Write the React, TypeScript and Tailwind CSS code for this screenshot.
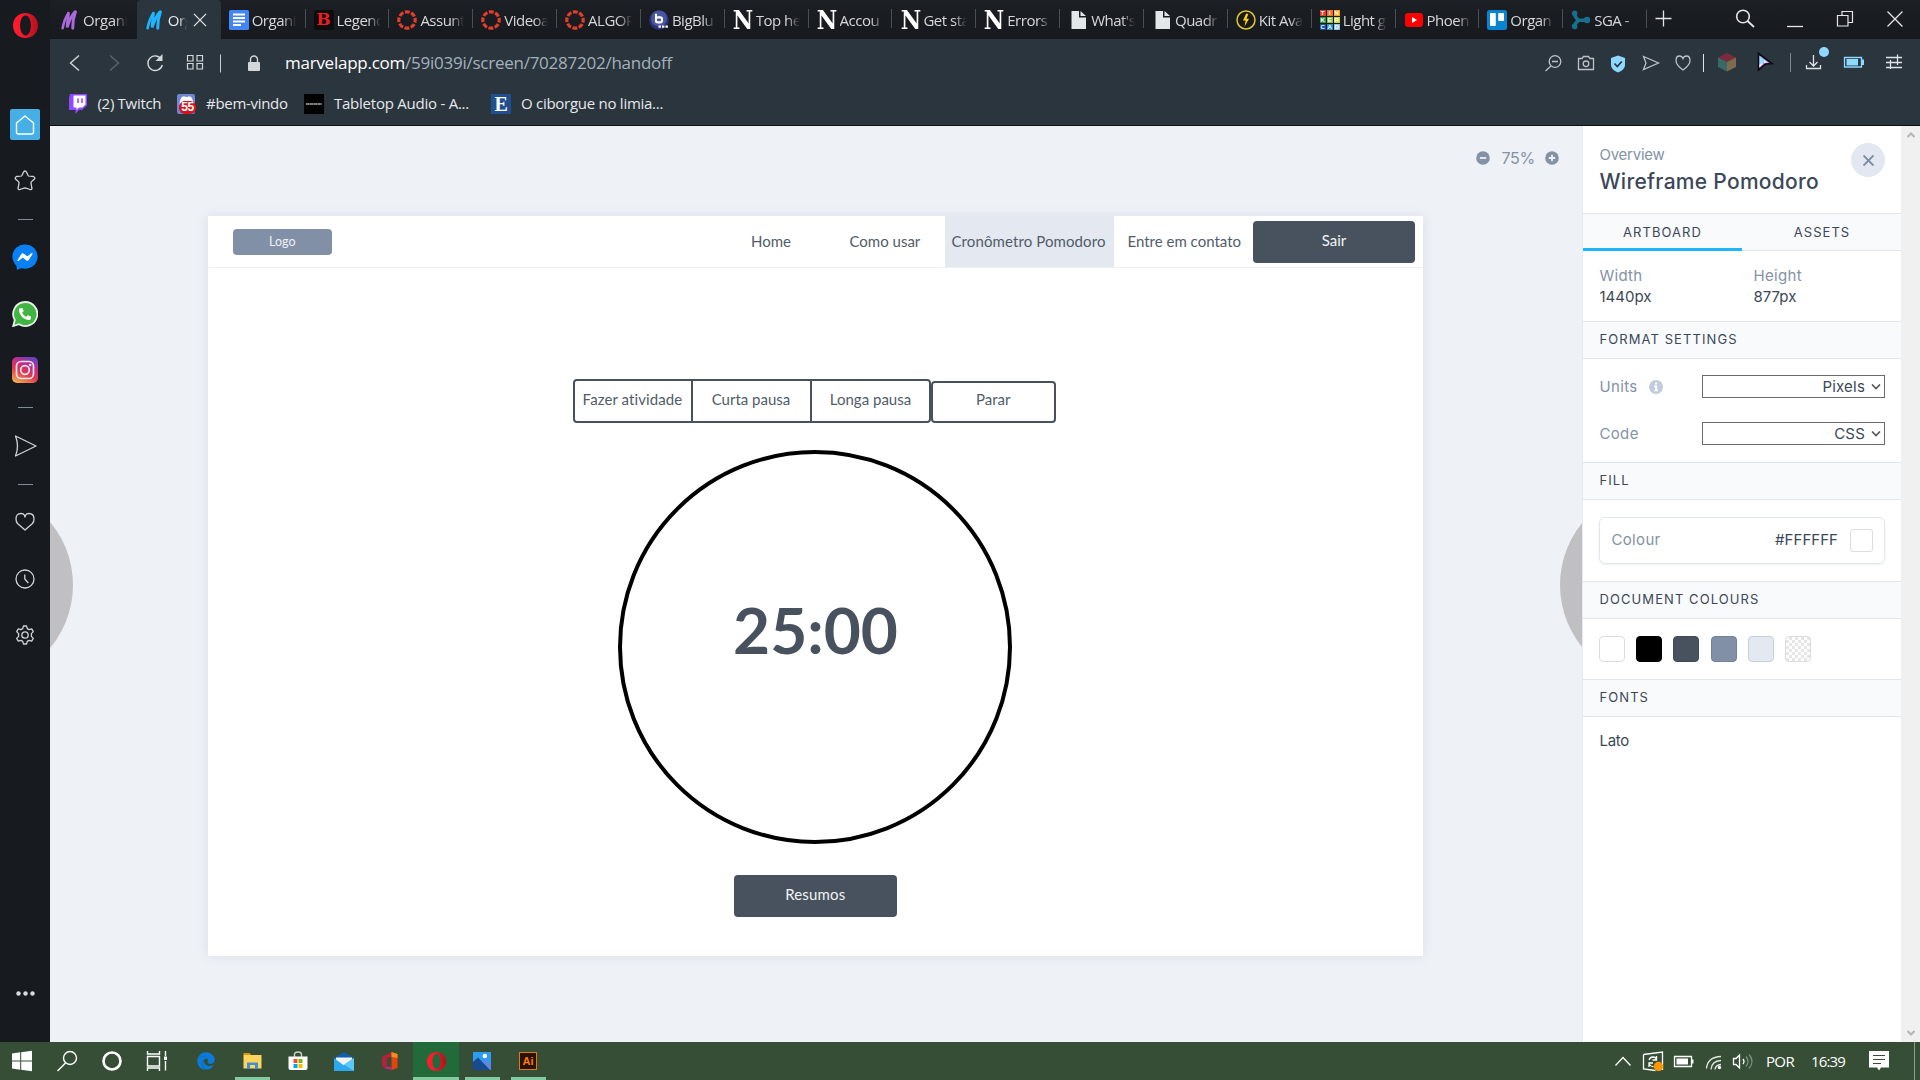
import React from 'react';
import { FaEdge, FaFacebookMessenger, FaPhoneAlt, FaDiscord } from 'react-icons/fa';

/* ---------- tab favicons ---------- */

const Marvel = ({ color }: { color: string }) => (
  <svg className="h-5 w-[17px] shrink-0" viewBox="0 0 17 20" fill="none" stroke={color} strokeLinecap="round">
    <path d="M1.600 18.200C2.600 13 4.200 8 7.200 3.400" strokeWidth="2.600" />
    <path d="M7.400 3.200C7.200 8 6 13 6.200 17.400C8 11.500 9.600 6.500 13.600 2.200" strokeWidth="2.800" />
    <path d="M14.400 1.800C12.600 7 11.600 12 11.800 18.200" strokeWidth="3" />
  </svg>
);
const Docs = () => (
  <svg className="size-5 shrink-0" viewBox="0 0 20 20">
    <rect width="20" height="20" rx="1.5" fill="#4285f4" />
    <path d="M4 4.500h12M4 8h12M4 11.500h12M4 15h8" stroke="#fff" strokeWidth="1.800" />
  </svg>
);
const LetterB = () => (
  <span className="flex size-5 shrink-0 items-center justify-center rounded-xs bg-[#0d0d0f] font-['DejaVu_Serif'] text-[17px] leading-none font-bold text-[#ec1c24]">B</span>
);
const Canvas = () => (
  <svg className="size-5 shrink-0" viewBox="0 0 20 20">
    <circle cx="10" cy="10" r="8.200" fill="none" stroke="#e13f2b" strokeWidth="3.200" strokeDasharray="4.900 1.540" strokeDashoffset="2.400" />
  </svg>
);
const BigBlue = () => (
  <svg className="size-5 shrink-0" viewBox="0 0 20 20">
    <circle cx="10" cy="10" r="9.800" fill="#283274" />
    <circle cx="10" cy="8.500" r="8" fill="#4a56a0" />
    <path d="M7 3.800v8.400M7 7.400h4.200q1.800 0 1.800 1.800v1.400q0 1.800-1.800 1.800H8.800q-1.800 0-1.800-1.800" stroke="#fff" strokeWidth="2.100" fill="none" />
    <path d="M9.500 16.600h2.400M13 16.600h2.400M16.500 16.600h2.400" stroke="#fff" strokeWidth="2.400" />
  </svg>
);
const LetterN = () => (
  <span className="flex h-5 w-5 shrink-0 items-center justify-center font-['DejaVu_Serif'] text-[26px] leading-none font-bold text-white">
    <span className="scale-x-[0.86]">N</span>
  </span>
);
const Page = () => (
  <svg className="h-5 w-5 shrink-0" viewBox="0 0 20 20" fill="#e4e7ea">
    <path d="M3.500 1h7.500v6.500H18V19H3.500zM12.500 1l5.500 5h-5.500z" />
  </svg>
);
const Bolt = () => (
  <svg className="size-5 shrink-0" viewBox="0 0 20 20">
    <circle cx="10" cy="10" r="9" fill="#191a12" stroke="#dfc63c" strokeWidth="1.500" />
    <path d="M10.200 3.500L7 10.600h2.600L8.600 16.600L13 8.800h-2.600L12.400 4z" fill="#ffd21a" />
  </svg>
);
const TINKER = [
  ['T', '#e33b2e'], ['I', '#f2702a'], ['N', '#f8a01c'],
  ['K', '#2a9d43'], ['E', '#8cc63f'], ['R', '#c9d62c'],
  ['C', '#1d4f9c'], ['A', '#2c8fd6'], ['D', '#8ac3e6'],
];
const Tinkercad = () => (
  <span className="grid size-5 shrink-0 grid-cols-3 gap-px">
    {TINKER.map(([l, c]) => (
      <span key={l} className="flex items-center justify-center overflow-hidden font-['Liberation_Sans'] text-[6px] leading-none font-bold text-white" style={{ background: c }}>{l}</span>
    ))}
  </span>
);
const YouTube = () => (
  <span className="flex size-5 shrink-0 items-center justify-center">
    <svg className="h-[14px] w-[18px]" viewBox="0 0 18 14"><rect width="18" height="14" rx="3" fill="#f00" /><path d="M7 4v6l5-3z" fill="#fff" /></svg>
  </span>
);
const Trello = () => (
  <svg className="size-5 shrink-0" viewBox="0 0 20 20">
    <rect width="20" height="20" rx="2.500" fill="#0a84d0" />
    <rect x="3" y="3" width="5.800" height="13" rx="1" fill="#fff" /><rect x="11.200" y="3" width="5.800" height="8" rx="1" fill="#fff" />
  </svg>
);
const Sga = () => (
  <svg className="size-5 shrink-0" viewBox="0 0 20 20">
    <g stroke="#17708f" strokeWidth="3.600" strokeLinecap="round" fill="#17708f">
      <path d="M3.400 3.200Q4 8 8 10.200Q4 12.600 3.400 16.600M8 10.200H16" fill="none" />
      <circle cx="3.600" cy="3.400" r="1" /><circle cx="3.600" cy="16.400" r="1" /><circle cx="16" cy="10" r="1.400" />
    </g>
  </svg>
);

const TABS: { t: string; icon: React.ReactNode }[] = [
  { t: 'Organi', icon: <Marvel color="#a86bd8" /> },
  { t: 'Org', icon: <Marvel color="#1fb6ff" /> },
  { t: 'Organi', icon: <Docs /> },
  { t: 'Legend', icon: <LetterB /> },
  { t: 'Assunt', icon: <Canvas /> },
  { t: 'Videoa', icon: <Canvas /> },
  { t: 'ALGOR', icon: <Canvas /> },
  { t: 'BigBlu', icon: <BigBlue /> },
  { t: 'Top he', icon: <LetterN /> },
  { t: 'Accou', icon: <LetterN /> },
  { t: 'Get sta', icon: <LetterN /> },
  { t: 'Errors', icon: <LetterN /> },
  { t: "What's", icon: <Page /> },
  { t: 'Quadr', icon: <Page /> },
  { t: 'Kit Ava', icon: <Bolt /> },
  { t: 'Light g', icon: <Tinkercad /> },
  { t: 'Phoen', icon: <YouTube /> },
  { t: 'Organ', icon: <Trello /> },
  { t: 'SGA -', icon: <Sga /> },
];

function TabStrip() {
  return (
    <div className="flex h-[39px] bg-linear-to-b from-[#1c1f24] to-[#16191d] pl-[3px]">
      {TABS.map((tab, i) => (
        <div
          key={i}
          className={
            i === 1
              ? 'flex w-[83.850px] shrink-0 items-center rounded-t bg-[#2b353e] pl-[9px]'
              : i < 3
                ? 'flex w-[83.850px] shrink-0 items-center pl-[8px]'
                : 'relative flex w-[83.850px] shrink-0 items-center pl-[9px]'
          }
        >
          {i > 2 && <span className="absolute top-[9px] left-0 h-[19px] w-px bg-[#4a4f55]" />}
          {tab.icon}
          <span
            className={
              i === 1
                ? 'ml-[5px] w-[19px] overflow-hidden text-[15px] leading-[38px] tracking-[-0.400px] whitespace-nowrap text-[#e8eaec] [mask-image:linear-gradient(to_right,black_60%,transparent)]'
                : i === 0
                  ? 'ml-[5px] w-[45px] overflow-hidden text-[15px] leading-[38px] tracking-[-0.400px] whitespace-nowrap text-[#d5d7d9] [mask-image:linear-gradient(to_right,black_70%,transparent_98%)]'
                  : 'ml-[3px] w-[44px] overflow-hidden text-[15px] leading-[38px] tracking-[-0.500px] whitespace-nowrap text-[#d5d7d9] [mask-image:linear-gradient(to_right,black_70%,transparent)]'
            }
          >
            {tab.t}
          </span>
          {i === 1 && (
            <svg className="ml-[6px] size-[14px] shrink-0" viewBox="0 0 15 15" stroke="#e8eaec" strokeWidth="1.300"><path d="M1 1l13 13M14 1L1 14" /></svg>
          )}
        </div>
      ))}
      <svg className="h-[39px] w-[220px] grow" viewBox="1646 0 274 39" preserveAspectRatio="none" fill="none" stroke="#e3e5e7" strokeWidth="1.300">
        <path d="M1646.500 9.500V28" stroke="#4a4f55" strokeWidth="1" />
        <path d="M1655.500 18.500h16M1663.500 10.500v16" />
        <circle cx="1743" cy="16.500" r="6.300" strokeWidth="1.600" />
        <path d="M1747.500 21L1754 27" strokeWidth="1.800" />
        <path d="M1787 26.500h16" />
        <path d="M1837.500 15.500h10.500v10.500h-10.500zM1842 15.500v-4h10.500v11h-4.500" strokeWidth="1.200" />
        <path d="M1887.500 11.500l15 15M1902.500 11.500l-15 15" />
      </svg>
    </div>
  );
}

function AddressBar() {
  return (
    <div className="flex h-[48px] items-center">
      <svg className="h-[48px] w-[224px] shrink-0" viewBox="50 39 224 48" fill="none" stroke="#d3d7da" strokeWidth="1.400">
        <path d="M79 55.500l-8.500 7.500l8.500 7.500" />
        <path d="M110 55.500l8.500 7.500l-8.500 7.500" stroke="#5d666e" />
        <path d="M161.500 59.500A7.300 7.300 0 1 0 162.300 65" />
        <path d="M162.500 54v7h-7z" fill="#d3d7da" stroke="none" />
        <path d="M187.500 55.500h5.500v5.500h-5.500zM197 55.500h5.500v5.500h-5.500zM187.500 63.500h5.500v5.500h-5.500zM197 63.500h5.500v5.500h-5.500z" strokeWidth="1.200" />
        <path d="M220.500 54.500v18" stroke="#c9cdd1" strokeWidth="1" />
        <path d="M250.500 63v-3.500a3.500 3.500 0 0 1 7 0v3.500" />
        <rect x="248" y="62" width="12" height="9" rx="1" fill="#d3d7da" stroke="none" />
      </svg>
      <span className="ml-[11px] text-[17px] leading-[48px] tracking-[-0.250px] whitespace-nowrap text-[#a4b1bb]">
        <span className="text-white">marvelapp.com</span>/59i039i/screen/70287202/handoff
      </span>
      <svg className="ml-auto h-[48px] w-[390px] shrink-0" viewBox="1530 39 390 48" fill="none" stroke="#bcc2c7" strokeWidth="1.300">
        <circle cx="1555" cy="61.500" r="5.800" /><path d="M1551 66l-5.500 5M1552 61.500h6" />
        <path d="M1578.500 58.500h3.500l1.500-2h5l1.500 2h3.500v11h-15z" /><circle cx="1586" cy="63.800" r="2.800" />
        <path d="M1618 55.500l7 2.500v7q0 4.500-7 7.500q-7-3-7-7.500v-7z" fill="#8fd8ff" stroke="none" />
        <path d="M1614.500 63.500l2.800 3l4.500-5" stroke="#24333d" strokeWidth="1.700" />
        <path d="M1643.500 56.500l15 6.500l-15 6.500l2.500-6.500z" />
        <path d="M1683 70q-7-5-7-9.500q0-4.500 3.500-4.500q2.500 0 3.500 2.500q1-2.500 3.500-2.500q3.500 0 3.500 4.500q0 4.500-7 9.500z" />
        <path d="M1703.500 54v18" strokeWidth="1" stroke="#e0e3e5" />
        <g stroke="none">
          <path d="M1727 53l9 4.500l-9 4.500l-9-4.500z" fill="#7b2c3c" />
          <path d="M1718 57.500l9 4.500v9.500l-9-4.500z" fill="#376a62" /><path d="M1736 57.500l-9 4.500v9.500l9-4.500z" fill="#7c6b4c" />
        </g>
        <path d="M1758.500 53.500l13.500 10l-6.500.5l-7 6z" fill="#b183e8" stroke="#0b0c0e" strokeWidth="1.700" />
        <path d="M1759.500 56l5.500 4.500l-5.500 7z" fill="#8fe0ff" stroke="none" /><path d="M1759.500 64.500l4-1.500l-4 4.500zM1764 60l4 2.500l-4 .5z" fill="#f3ecff" stroke="none" />
        <path d="M1790.500 53v19" strokeWidth="1" stroke="#7f878e" />
        <path d="M1813.500 55v11M1809.500 62l4 4l4-4M1806.500 65v3.500h14v-3.500" stroke="#e0e3e5" />
        <circle cx="1824" cy="52" r="5" fill="#8fd8ff" stroke="none" />
        <path d="M1844.500 57.500h17v9.500h-17z" stroke="#8fd8ff" /><path d="M1846.500 59h11.500v6.500h-11.500zM1862 59.500h2v5.500h-2z" fill="#8fd8ff" stroke="none" />
        <path d="M1886 57.500h16M1886 62.500h16M1886 67.500h16M1897.500 54.500v5.500M1890.500 60v5M1897.500 60v5M1890.500 65v4" stroke="#e0e3e5" />
      </svg>
    </div>
  );
}

function Bookmarks() {
  return (
    <div className="flex h-[33px] items-center text-[15px] leading-[33px] tracking-[-0.300px] whitespace-nowrap text-[#e6e8ea]">
      <svg className="ml-[19px] h-5 w-[18px]" viewBox="0 0 18 20"><path d="M1 0H18V11.500L13 16H10L6.500 20V16H0V4z" fill="#9146ff" /><path d="M4.500 1.500h12v9l-3 3h-3.500l-2.500 2.500v-2.500h-3z" fill="#fff" /><path d="M9 4.500v4.500M13 4.500v4.500" stroke="#9146ff" strokeWidth="1.600" /></svg>
      <span className="ml-[10.500px] w-[68.500px] tracking-[-0.300px]">(2) Twitch</span>
      <span className="relative ml-[11px] flex h-5 w-[18px] justify-center rounded-xs bg-[#6f86d4]">
        <FaDiscord className="size-[15px] text-white" />
        <span className="absolute -right-px bottom-0 flex h-[13px] w-[17px] items-center justify-center rounded-md bg-[#d8121a] font-['Liberation_Sans'] text-[12px] leading-none font-bold tracking-[-0.500px] text-white">55</span>
      </span>
      <span className="ml-[11px] w-[97px]">#bem-vindo</span>
      <span className="ml-px flex h-5 w-5 items-center justify-center bg-black">
        <svg className="h-1 w-4" viewBox="0 0 16 4"><path d="M0 2h16" stroke="#a9a9a9" strokeWidth="1.600" strokeDasharray="3.400 .4" /></svg>
      </span>
      <span className="ml-[10px] w-[157px] tracking-[-0.240px]">Tabletop Audio - A...</span>
      <span className="flex h-5 w-5 items-center justify-center bg-[#1f4f91] font-['Liberation_Serif'] text-[20px] leading-none font-bold text-white">E</span>
      <span className="ml-[10px] tracking-[-0.270px]">O ciborgue no limia...</span>
    </div>
  );
}

/* ---------- Opera sidebar ---------- */

const Dash = () => <span className="block h-px w-[15px] bg-[#7f8b95]" />;

const OperaLogo = ({ id, className }: { id: string; className: string }) => (
  <svg className={className} viewBox="0 0 24 24">
    <defs>
      <linearGradient id={id} x1="0" x2="1"><stop offset=".3" stopColor="#ff1b2d" /><stop offset="1" stopColor="#b20f1d" /></linearGradient>
    </defs>
    <path fillRule="evenodd" fill={`url(#${id})`} d="M12 0C18.600 0 24 5 24 12s-5.400 12-12 12S0 19 0 12S5.400 0 12 0zM12 2.500C8.800 2.500 6.800 7 6.800 12s2 9.500 5.200 9.500s5.200-4.500 5.200-9.500s-2-9.500-5.200-9.500z" />
  </svg>
);

function Sidebar() {
  return (
    <aside className="flex w-[50px] shrink-0 flex-col items-center bg-[#171b20]">
      <OperaLogo id="opera-side" className="mt-[13px] size-[25px]" />
      <span className="mt-[71px] flex h-[31px] w-[30px] items-center justify-center rounded-xs bg-[#46b0e6]">
        <svg className="size-[20px]" viewBox="0 0 20 20" fill="none" stroke="#fff" strokeWidth="1.400"><path d="M1.500 8L10 1l8.500 7v9q0 2-2 2h-13q-2 0-2-2z" strokeLinejoin="round" /></svg>
      </span>
      <svg className="mt-[30px] mr-px h-[21px] w-[22px]" viewBox="0 0 22 21" fill="none" stroke="#d0d4d8" strokeWidth="1.300" strokeLinejoin="round"><path d="M11 1q1 0 1.800 1.800Q13.900 5.600 14.500 6q1 .3 5 .5Q21.500 7.500 20.500 9q-3.300 2.700-3.500 3.500q0 1.500 1 6q-.5 1.500-2 1q-3.800-1.500-5-1.500t-5 1.500q-1.500.5-2-1q1-4.500 1-6Q4.800 11.700 1.500 9Q.5 7.500 2.500 6.500q4-.2 5-.5Q8.100 5.600 9.200 2.800Q10 1 11 1z" /></svg>
      <div className="mt-[28px]"><Dash /></div>
      <span className="relative mt-[24px] flex size-[26px] items-center justify-center">
        <span className="absolute inset-1 rounded-full bg-white" />
        <FaFacebookMessenger className="relative size-[26px] text-[#0a80f5]" />
      </span>
      <span className="relative mt-[31px] flex size-[26px] items-center justify-center">
        <svg className="absolute inset-0 size-[26px]" viewBox="0 0 26 26"><path d="M13 1a12 12 0 1 1-6 22.200L1.200 25l1.600-6A12 12 0 0 1 13 1z" fill="#41b543" stroke="#e9efe9" strokeWidth="1.800" /></svg>
        <FaPhoneAlt className="relative size-[12px] -scale-x-100 rotate-90 text-white" />
      </span>
      <svg className="mt-[30px] size-[26px]" viewBox="0 0 26 26" fill="none">
        <defs>
          <linearGradient id="insta" x1=".2" y1="1" x2=".7" y2="0"><stop stopColor="#f3b04b" /><stop offset=".4" stopColor="#e2384f" /><stop offset=".75" stopColor="#b82d91" /><stop offset="1" stopColor="#6743bd" /></linearGradient>
        </defs>
        <rect width="26" height="26" rx="5" fill="url(#insta)" />
        <rect x="4.500" y="4.500" width="17" height="17" rx="4.500" stroke="#f5e9ee" strokeWidth="1.700" /><circle cx="13" cy="13" r="4.300" stroke="#f5e9ee" strokeWidth="1.700" /><circle cx="18.200" cy="8" r="1.200" fill="#fff" />
      </svg>
      <div className="mt-[24px]"><Dash /></div>
      <svg className="mt-[27px] h-[22px] w-[23px]" viewBox="0 0 23 22" fill="none" stroke="#d0d4d8" strokeWidth="1.300" strokeLinejoin="round"><path d="M1.500 1L22 11L1.500 21Q5.500 11 1.500 1z" /></svg>
      <div className="mt-[27px]"><Dash /></div>
      <svg className="mt-[27px] mr-px h-[19px] w-[20px]" viewBox="0 0 20 19" fill="none" stroke="#d0d4d8" strokeWidth="1.300" strokeLinejoin="round"><path d="M10 18L2.500 11.500Q1 9.500 1 7Q1 1.500 6 1.500Q8.500 1.500 9.300 3L10 5L10.700 3Q11.500 1.500 14 1.500Q19 1.500 19 7Q19 9.500 17.500 11.500z" /></svg>
      <svg className="mt-[38px] mr-px size-[20px]" viewBox="0 0 20 20" fill="none" stroke="#d0d4d8" strokeWidth="1.300"><circle cx="10" cy="10" r="9" /><path d="M9.800 5.500v4.500l3.500 4" /></svg>
      <svg className="mt-[36px] mr-px size-[20px]" viewBox="0 0 20 20" fill="none" stroke="#d0d4d8" strokeWidth="1.300" strokeLinejoin="round"><circle cx="10" cy="10" r="3.200" /><path d="M8.500 1h3l.8 2.600l1.700 1l2.700-.7l1.600 2.700l-1.900 2v2.800l1.900 2l-1.600 2.700l-2.700-.7l-1.700 1l-.8 2.600h-3l-.8-2.600l-1.700-1l-2.700.7l-1.600-2.700l1.900-2V8.600l-1.900-2l1.600-2.700l2.700.7l1.700-1z" /></svg>
      <svg className="mt-[346px] h-[5px] w-[19px]" viewBox="0 0 19 5" fill="#d8dbde"><circle cx="2.500" cy="2.500" r="2.200" /><circle cx="9.500" cy="2.500" r="2.200" /><circle cx="16.500" cy="2.500" r="2.200" /></svg>
    </aside>
  );
}

/* ---------- artboard ---------- */

function Artboard() {
  return (
    <div className="flex h-[740px] w-[1215px] flex-col bg-white font-['Lato',sans-serif] text-[15px] text-[#525c68] shadow-[0_0_10px_rgba(132,146,166,0.180)]">
      <header className="flex h-[52px] shrink-0 items-start border-b border-[#edf1f7] leading-[50px] whitespace-nowrap">
        <div className="mt-[13px] ml-[24.500px] h-[26px] w-[99.500px] rounded bg-[#8190a7] text-center text-[12.500px] leading-[25px] text-[#eef1f5]">Logo</div>
        <span className="ml-[419px] w-[98.500px]">Home</span>
        <span className="w-[95px]">Como usar</span>
        <span className="h-[51px] w-[169px] bg-[#e4e8f1] pl-[7px] tracking-[0.100px]">Cronômetro Pomodoro</span>
        <span className="w-[139.500px] pl-[14px]">Entre em contato</span>
        <div className="mt-[5px] h-[42px] w-[162px] rounded bg-[#48525e] text-center leading-[39px] text-[#f1f3f5]">Sair</div>
      </header>
      <div className="mt-[111px] ml-[364.500px] flex items-end text-center leading-[37px] whitespace-nowrap">
        <div className="flex h-[43.500px] rounded border-2 border-[#48525e]">
          <span className="w-[118px] border-r-2 border-[#48525e] tracking-[0.100px]">Fazer atividade</span>
          <span className="w-[119px] border-r-2 border-[#48525e]">Curta pausa</span>
          <span className="w-[117px] pl-px">Longa pausa</span>
        </div>
        <div className="h-[42px] w-[125.500px] rounded border-2 border-[#48525e] leading-[32px]">Parar</div>
      </div>
      <div className="mt-[27px] flex justify-center">
        <div className="mr-px h-[394px] w-[394px] rounded-full border-4 border-black pt-[136px] pl-px text-center text-[64px] leading-[80px] font-bold text-[#48525e]">25:00</div>
      </div>
      <div className="mt-[31px] ml-[526px] h-[42px] w-[162.500px] rounded bg-[#48525e] text-center leading-[39px] tracking-[0.150px] text-[#f1f3f5]">Resumos</div>
    </div>
  );
}

function ArtboardArea() {
  return (
    <main className="relative flex-1 overflow-hidden bg-[#eef1f6]">
      <span className="absolute top-[361px] -left-[173px] size-[196px] rounded-full bg-[#c0c0c3]" />
      <span className="absolute top-[361px] left-[1510px] size-[196px] rounded-full bg-[#c0c0c3]" />
      <div className="flex h-[64px] items-center justify-end pr-[23px] font-['Inter',sans-serif] text-[16px] text-[#8492a6]">
        <svg className="size-[14px]" viewBox="0 0 14 14"><circle cx="7" cy="7" r="6.800" fill="#8492a6" /><path d="M3.800 7h6.400" stroke="#eef1f6" strokeWidth="1.800" /></svg>
        <span className="mr-[10px] ml-[12px] tracking-[-0.280px]">75%</span>
        <svg className="size-[14px]" viewBox="0 0 14 14"><circle cx="7" cy="7" r="6.800" fill="#8492a6" /><path d="M3.800 7h6.400M7 3.800v6.400" stroke="#eef1f6" strokeWidth="1.800" /></svg>
      </div>
      <div className="mt-[26px] ml-[158px]"><Artboard /></div>
    </main>
  );
}

/* ---------- inspector ---------- */

const SectionTitle = ({ children }: { children: React.ReactNode }) => (
  <h3 className="h-[38px] border-y border-[#e0e6f0] bg-[#f9fafc] pl-[16.500px] text-[13px] leading-[35px] tracking-[1.080px] text-[#3c4858]">{children}</h3>
);

const SelectBox = ({ value }: { value: string }) => (
  <div className="flex h-[23px] w-[183px] items-center justify-end border border-[#6b6b6b] pr-[3px] text-[#3c4858]">
    <span className="translate-y-px tracking-[0.200px]">{value}</span>
    <svg className="ml-[6px] h-[6px] w-[10px]" viewBox="0 0 10 6" fill="none" stroke="#555" strokeWidth="1.600"><path d="M1 .5l4 4l4-4" /></svg>
  </div>
);

const SWATCHES = ['bg-white border-[#dcdcdc]', 'bg-black border-black', 'bg-[#48525e] border-[#404954]', 'bg-[#8190a7] border-[#74829a]', 'bg-[#e4e8f1] border-[#c8cedb]'];

function Inspector() {
  return (
    <section className="w-[319px] shrink-0 border-l border-[#e5e9f2] bg-white font-['Inter',sans-serif] text-[15px] text-[#3c4858]">
      <div className="flex h-[87px] justify-between pr-[16px] pl-[16.500px]">
        <div className="whitespace-nowrap">
          <p className="mt-[19px] leading-[20px] tracking-[-0.250px] text-[#8492a6]">Overview</p>
          <p className="mt-[2px] text-[21px] leading-[30px] font-medium tracking-[0.290px]">Wireframe Pomodoro</p>
        </div>
        <span className="mt-[17px] flex size-[34px] items-center justify-center rounded-full bg-[#e2e7f1]">
          <svg className="size-[11px]" viewBox="0 0 11 11" stroke="#7c8aa0" strokeWidth="1.900"><path d="M.5.5l10 10M10.500.5l-10 10" /></svg>
        </span>
      </div>
      <div className="flex h-[38px] border-y border-[#e0e6f0] bg-[#f9fafc] text-center text-[13px] leading-[36px] tracking-[1.050px]">
        <span className="-mb-px w-[159px] border-b-[3px] border-[#1fb6ff]">ARTBOARD</span>
        <span className="w-[159px] pl-px">ASSETS</span>
      </div>
      <div className="flex h-[70px] pt-[14px] pl-[16.500px] leading-[21px]">
        <div className="w-[154px]"><p className="tracking-[0.250px] text-[#8492a6]">Width</p><p>1440px</p></div>
        <div><p className="tracking-[0.350px] text-[#8492a6]">Height</p><p>877px</p></div>
      </div>
      <SectionTitle>FORMAT SETTINGS</SectionTitle>
      <div className="h-[103px] pt-[16px] pr-[16px] pl-[16.500px]">
        <div className="flex items-center">
          <span className="translate-y-px tracking-[0.330px] text-[#8492a6]">Units</span>
          <svg className="mr-auto ml-[11px] size-[14px]" viewBox="0 0 14 14"><circle cx="7" cy="7" r="7" fill="#c0ccda" /><path d="M6 2.500h2.200v1.900H6zM5.200 5.600h3v4.300h.9v1.400H5.200V9.900h.9V7h-.9z" fill="#fff" /></svg>
          <SelectBox value="Pixels" />
        </div>
        <div className="mt-[24px] flex items-center justify-between">
          <span className="translate-y-px tracking-[0.330px] text-[#8492a6]">Code</span>
          <SelectBox value="CSS" />
        </div>
      </div>
      <SectionTitle>FILL</SectionTitle>
      <div className="h-[81px] px-[16px] pt-[17px]">
        <div className="flex h-[47px] items-center rounded-md border border-[#e0e6f0] pr-[11px] pl-[11.500px] shadow-[0_1px_2px_rgba(132,146,166,0.150)]">
          <span className="tracking-[0.330px] text-[#8492a6]">Colour</span>
          <span className="ml-auto tracking-[0.050px]">#FFFFFF</span>
          <span className="ml-[12px] size-[23px] rounded-[3px] border border-[#dcdcdc]" />
        </div>
      </div>
      <SectionTitle>DOCUMENT COLOURS</SectionTitle>
      <div className="flex h-[60px] gap-[11.200px] pt-[17px] pl-[16px]">
        {SWATCHES.map((c) => <span key={c} className={`size-[26px] rounded border ${c}`} />)}
        <span className="size-[26px] rounded border border-[#dcdcdc] bg-[conic-gradient(#e6e6e6_25%,#fff_0_50%,#e6e6e6_0_75%,#fff_0)] bg-[length:6px_6px]" />
      </div>
      <SectionTitle>FONTS</SectionTitle>
      <p className="mt-[14px] pl-[16.500px] leading-[20px] tracking-[-0.290px]">Lato</p>
    </section>
  );
}

/* ---------- taskbar ---------- */

const Slot = ({ children, open, active }: { children: React.ReactNode; open?: boolean; active?: boolean }) => (
  <span className={active ? 'relative flex h-full w-[46px] items-center justify-center bg-[#236a3b]' : 'relative flex h-full w-[46px] items-center justify-center'}>
    {children}
    {open && <span className={active ? 'absolute bottom-0 left-0 h-[3px] w-full bg-[#84c9a0]' : 'absolute bottom-0 h-[3px] w-[35px] bg-[#84c9a0]'} />}
  </span>
);

function Taskbar() {
  return (
    <footer className="flex h-[38px] items-center bg-[#364e36] text-[15px] text-white">
      <svg className="h-[38px] w-[183px]" viewBox="0 1042 183 38" fill="none" stroke="#fff" strokeWidth="1.400">
        <path d="M12 1053.500l8.200-1.200v8.200H12zM21.200 1052.200l10.800-1.500v9.800H21.200zM12 1061.500h8.200v8.200l-8.200-1.200zM21.200 1061.500H32v9.800l-10.800-1.500z" fill="#fff" stroke="none" />
        <circle cx="70" cy="1058" r="6.500" /><path d="M65.500 1063l-8 8" />
        <circle cx="112" cy="1061" r="8.500" strokeWidth="2.600" />
        <path d="M147.500 1051v3h12v-3M147.500 1056.500h12v9.500h-12zM147.500 1071v-3h12v3M165.500 1051v5M165.500 1061v9.500" /><path d="M164 1056.500h3v3.500h-3z" fill="#fff" stroke="none" />
      </svg>
      <Slot><FaEdge className="size-[18px] text-[#0a7bdc]" /></Slot>
      <Slot open>
        <svg className="h-[18px] w-[19px]" viewBox="0 0 19 18"><path d="M.5 1h6l2 2.500H.5z" fill="#d9960d" /><path d="M.5 3h18v13.500H.5z" fill="#ffd35c" /><path d="M4 17v-6.500h11V17h-3v-4H7v4z" fill="#3e8fd6" /></svg>
      </Slot>
      <Slot>
        <svg className="h-[20px] w-[20px]" viewBox="0 0 20 20"><path d="M6.500 6V3.500Q6.500 1 10 1t3.500 2.500V6" fill="none" stroke="#c9cfc9" strokeWidth="1.400" /><path d="M.5 5.500h19v11.500q0 2-2 2h-15q-2 0-2-2z" fill="#fff" /><path d="M5.500 8h4v4h-4z" fill="#f25022" /><path d="M10.500 8h4v4h-4z" fill="#7fba00" /><path d="M5.500 13h4v4h-4z" fill="#00a4ef" /><path d="M10.500 13h4v4h-4z" fill="#ffb900" /></svg>
      </Slot>
      <Slot>
        <svg className="h-[19px] w-[20px]" viewBox="0 0 20 19"><path d="M0 6l10-6l10 6v5H0z" fill="#0f5fb5" /><path d="M2 5.500h16v8H2z" fill="#f2f2f2" /><path d="M0 6l10 7.500L20 6v13H0z" fill="#2ba9ef" /><path d="M20 19L10 12.500L20 6z" fill="#5cc8f7" /></svg>
      </Slot>
      <Slot>
        <svg className="h-[20px] w-[16px]" viewBox="0 0 16 20"><path d="M9.500 1v4.500L5 7v8L2 17L0 14.500V6z" fill="#b5213a" /><path d="M9.500 1L15.500 3v14L9.500 19z" fill="#e2440c" /><path d="M9.500 1L15.500 3v4l-6-1z" fill="#f08d1c" /><path d="M2 17l3-1.500l5 .5v3z" fill="#c2267a" /></svg>
      </Slot>
      <Slot open active><OperaLogo id="opera-task" className="size-[19px]" /></Slot>
      <Slot open>
        <svg className="size-[18px]" viewBox="0 0 18 18"><path d="M0 0h18v18H0z" fill="#2c9df0" /><path d="M8 12l5-5l5 5v6H8z" fill="#5f86e0" /><path d="M0 10l5-4.500L17 18H0z" fill="#174a8e" /><circle cx="11.800" cy="4" r="2.200" fill="#fff" /></svg>
      </Slot>
      <Slot open>
        <span className="flex h-[18px] w-[18px] items-center justify-center border-[1.500px] border-[#e37a0c] bg-[#2a1200] font-['Liberation_Sans'] text-[11px] leading-none font-bold text-[#ff7c00]">Ai</span>
      </Slot>
      <svg className="ml-auto h-[38px] w-[160px]" viewBox="1606 1042 160 38" fill="none" stroke="#fff" strokeWidth="1.300">
        <path d="M1615.500 1065.500l7.500-8l7.500 8" />
        <path d="M1643.500 1054.500l19-2.500v18M1643.500 1054.500v14.500l12 1.500" />
        <path d="M1649 1060q1-3 4-3t3.500 2.500M1656.500 1056v4h-4M1649 1067v-4h4M1649 1064q2 3 4.500 2.500" />
        <circle cx="1658.500" cy="1066.500" r="4.700" fill="#ff9500" stroke="none" />
        <path d="M1674.500 1056.500h17v10h-17z" /><path d="M1676.500 1058.500h11.500v6h-11.500zM1692 1059.500h1.500v4h-1.500z" fill="#fff" stroke="none" />
        <path d="M1706.500 1068.500q1-11.500 14.500-12M1711 1069.500q.5-8.500 10-9M1715 1069.500q.5-4.500 6-5" stroke="#dfe5df" /><circle cx="1719.500" cy="1067.500" r="1.700" fill="#fff" stroke="none" />
        <path d="M1733.500 1058.500h2.500l3.500-3.500v13l-3.500-3.500h-2.500z" /><path d="M1743 1059q2 2.500 0 5" /><path d="M1746 1056.500q4 5 0 10M1749 1054.500q6 7 0 14" stroke="#7d907d" />
      </svg>
      <span className="w-[45px] tracking-[-0.650px]">POR</span>
      <span className="w-[58px] tracking-[-0.850px]">16:39</span>
      <svg className="h-[38px] w-[51px]" viewBox="1869 1042 51 38"><path d="M1869 1051h20v16.500h-8l-2 3l-2-3h-8z" fill="#fff" /><path d="M1873 1055.500h12M1873 1059.500h12M1873 1063.500h8" stroke="#364e36" strokeWidth="1.100" /><path d="M1914.500 1042v38" stroke="#8c9b8c" /></svg>
    </footer>
  );
}

export default function App() {
  return (
    <div className="flex h-[1080px] w-[1920px] flex-col overflow-hidden font-['Open_Sans',sans-serif]">
      <div className="flex h-[1042px] bg-[#171b20]">
        <Sidebar />
        <div className="flex w-[1870px] flex-col">
          <TabStrip />
          <div className="h-[87px] border-b border-[#0d1013] bg-[#2b353e]">
            <AddressBar />
            <Bookmarks />
          </div>
          <div className="flex flex-1">
            <ArtboardArea />
            <Inspector />
            <div className="flex w-[19px] flex-col items-center justify-between bg-[#f0f0f0] py-[6px]">
              <svg className="h-[6px] w-[8px]" viewBox="0 0 8 6" fill="none" stroke="#b5b5b5" strokeWidth="2"><path d="M.5 5L4 1.500L7.500 5" /></svg>
              <svg className="h-[6px] w-[8px]" viewBox="0 0 8 6" fill="none" stroke="#b5b5b5" strokeWidth="2"><path d="M.5 1L4 4.500L7.500 1" /></svg>
            </div>
          </div>
        </div>
      </div>
      <Taskbar />
    </div>
  );
}
